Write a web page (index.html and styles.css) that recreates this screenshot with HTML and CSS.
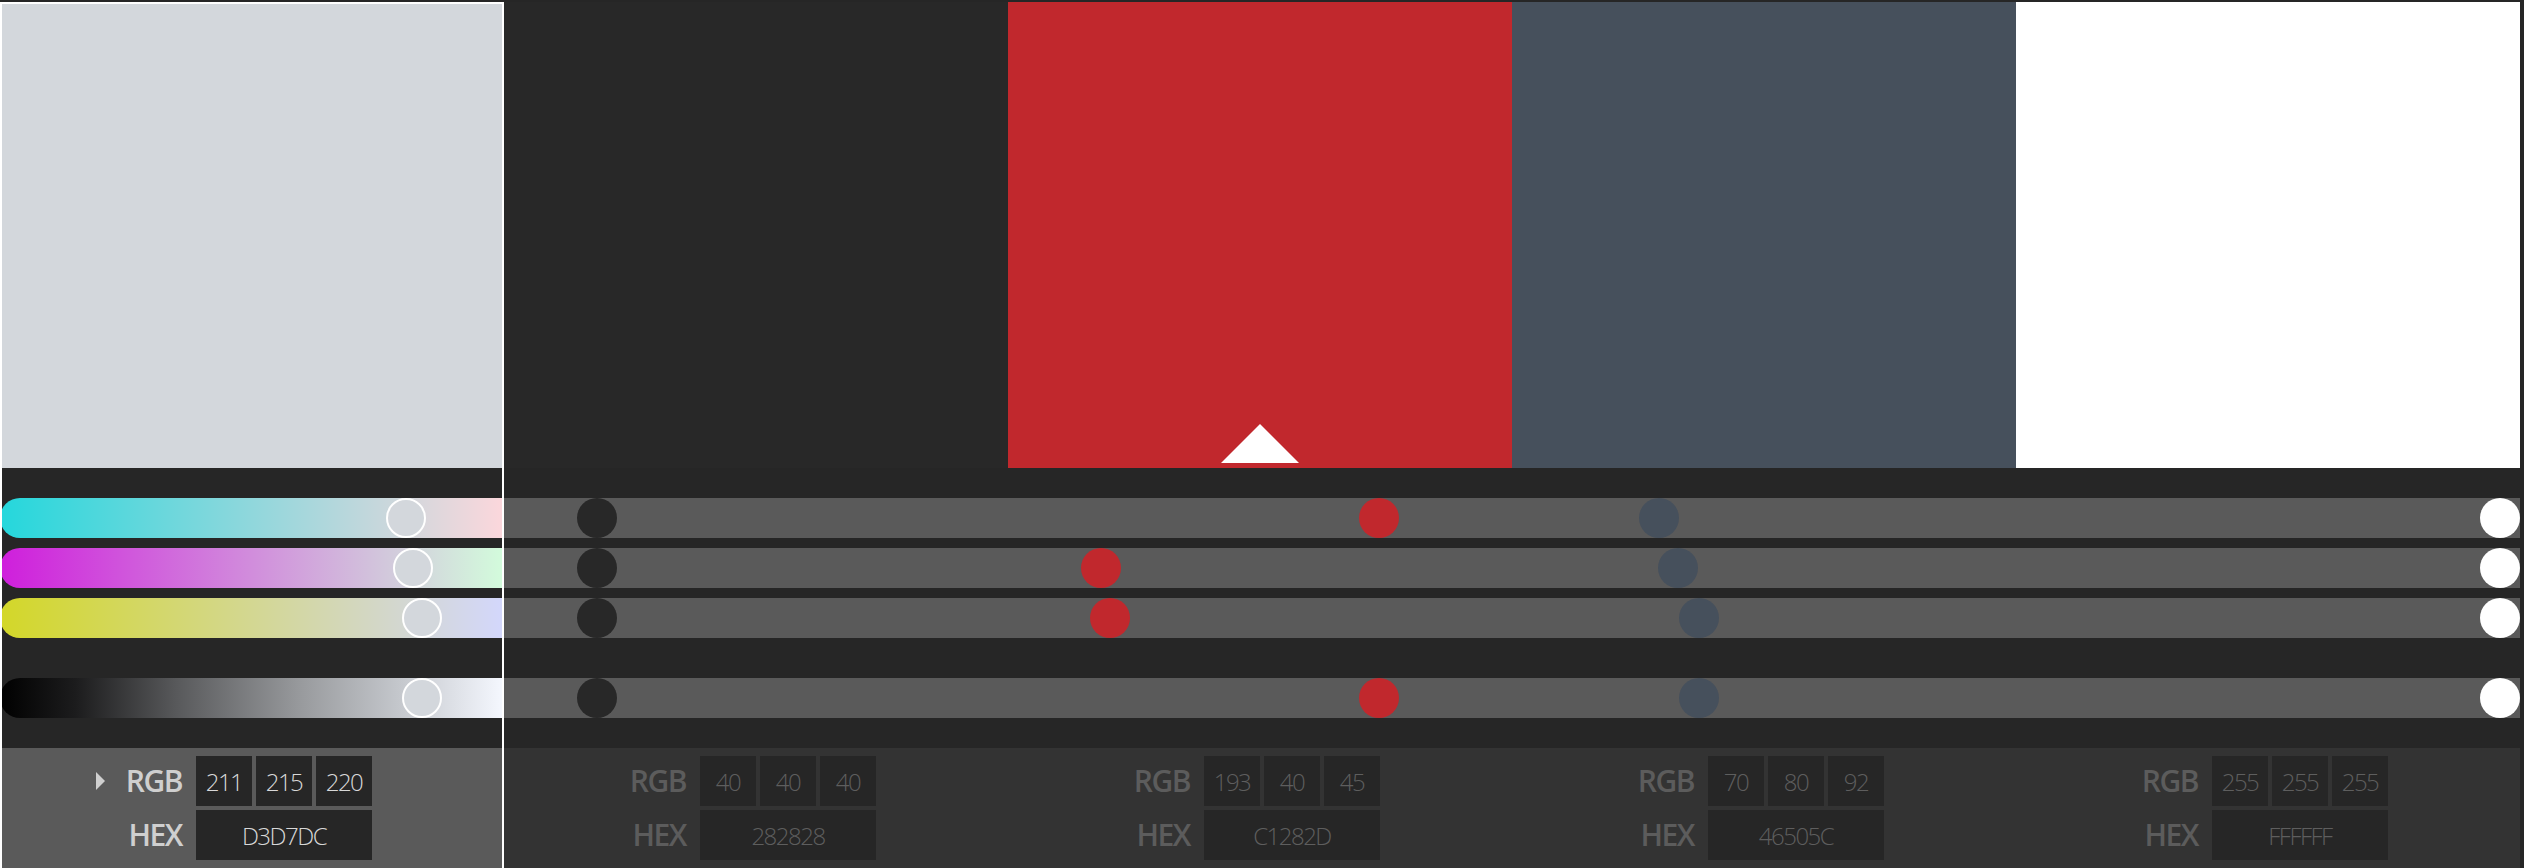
FILE: index.html
```html
<!DOCTYPE html>
<html lang="en">
<head>
<meta charset="utf-8">
<title>Palette picker</title>
<link rel="stylesheet" href="styles.css">
</head>
<body>
<div class="picker">
  <div class="col selected">
    <div class="swatch" style="background:#d3d7dc"></div>
    <div class="sliders">
      <div class="track grad-r"><span class="thumb ring" style="--v:211"></span></div>
      <div class="track grad-g"><span class="thumb ring" style="--v:215"></span></div>
      <div class="track grad-b"><span class="thumb ring" style="--v:220"></span></div>
      <div class="track grad-v spaced"><span class="thumb ring" style="--v:220"></span></div>
    </div>
    <div class="panel">
      <div class="row"><span class="label"><span class="caret"></span>RGB</span><div class="boxes"><span class="box">211</span><span class="box">215</span><span class="box">220</span></div></div>
      <div class="row"><span class="label">HEX</span><span class="box wide">D3D7DC</span></div>
    </div>
  </div>

  <div class="col">
    <div class="swatch" style="background:#282828"></div>
    <div class="sliders">
      <div class="track"><span class="thumb" style="--v:40;background:#282828"></span></div>
      <div class="track"><span class="thumb" style="--v:40;background:#282828"></span></div>
      <div class="track"><span class="thumb" style="--v:40;background:#282828"></span></div>
      <div class="track spaced"><span class="thumb" style="--v:40;background:#282828"></span></div>
    </div>
    <div class="panel">
      <div class="row"><span class="label">RGB</span><div class="boxes"><span class="box">40</span><span class="box">40</span><span class="box">40</span></div></div>
      <div class="row"><span class="label">HEX</span><span class="box wide">282828</span></div>
    </div>
  </div>

  <div class="col">
    <div class="swatch" style="background:#c1282d"><span class="pointer"></span></div>
    <div class="sliders">
      <div class="track"><span class="thumb" style="--v:193;background:#c1282d"></span></div>
      <div class="track"><span class="thumb" style="--v:40;background:#c1282d"></span></div>
      <div class="track"><span class="thumb" style="--v:45;background:#c1282d"></span></div>
      <div class="track spaced"><span class="thumb" style="--v:193;background:#c1282d"></span></div>
    </div>
    <div class="panel">
      <div class="row"><span class="label">RGB</span><div class="boxes"><span class="box">193</span><span class="box">40</span><span class="box">45</span></div></div>
      <div class="row"><span class="label">HEX</span><span class="box wide">C1282D</span></div>
    </div>
  </div>

  <div class="col">
    <div class="swatch" style="background:#46505c"></div>
    <div class="sliders">
      <div class="track"><span class="thumb" style="--v:70;background:#46505c"></span></div>
      <div class="track"><span class="thumb" style="--v:80;background:#46505c"></span></div>
      <div class="track"><span class="thumb" style="--v:92;background:#46505c"></span></div>
      <div class="track spaced"><span class="thumb" style="--v:92;background:#46505c"></span></div>
    </div>
    <div class="panel">
      <div class="row"><span class="label">RGB</span><div class="boxes"><span class="box">70</span><span class="box">80</span><span class="box">92</span></div></div>
      <div class="row"><span class="label">HEX</span><span class="box wide">46505C</span></div>
    </div>
  </div>

  <div class="col">
    <div class="swatch" style="background:#ffffff"></div>
    <div class="sliders">
      <div class="track"><span class="thumb" style="--v:255;background:#ffffff"></span></div>
      <div class="track"><span class="thumb" style="--v:255;background:#ffffff"></span></div>
      <div class="track"><span class="thumb" style="--v:255;background:#ffffff"></span></div>
      <div class="track spaced"><span class="thumb" style="--v:255;background:#ffffff"></span></div>
    </div>
    <div class="panel">
      <div class="row"><span class="label">RGB</span><div class="boxes"><span class="box">255</span><span class="box">255</span><span class="box">255</span></div></div>
      <div class="row"><span class="label">HEX</span><span class="box wide">FFFFFF</span></div>
    </div>
  </div>
</div>
</body>
</html>
```

FILE: styles.css
```css
html, body {
  margin: 0;
  padding: 0;
  background: #262626;
  height: 868px;
  overflow: hidden;
}

.picker {
  display: grid;
  grid-template-columns: repeat(5, 504px);
  padding-top: 2px;
  font-family: "Open Sans", "Noto Sans", sans-serif;
}

.col {
  position: relative;
  display: flex;
  flex-direction: column;
}

.col.selected::after {
  content: "";
  position: absolute;
  inset: 0;
  border: 2px solid #ffffff;
  border-bottom: none;
  pointer-events: none;
}

.swatch {
  position: relative;
  height: 466px;
}

.pointer {
  position: absolute;
  left: 50%;
  bottom: 5px;
  width: 78px;
  height: 39px;
  transform: translateX(-50%);
  background: #ffffff;
  clip-path: polygon(50% 0, 100% 100%, 0 100%);
}

.sliders {
  display: flex;
  flex-direction: column;
  gap: 10px;
  padding: 30px 0;
}

.track {
  position: relative;
  height: 40px;
  background: #5a5a5a;
}

.track.spaced {
  margin-top: 30px;
}

.selected .track {
  border-radius: 20px 0 0 20px;
}

.selected .thumb {
  margin-left: 2px;
}

.grad-r { background: linear-gradient(to right, rgb(36,215,220), rgb(252,215,220)); }
.grad-g { background: linear-gradient(to right, rgb(207,30,220), rgb(211,252,220)); }
.grad-b { background: linear-gradient(to right, rgb(211,215,40), rgb(211,215,252)); }
.grad-v { background: linear-gradient(to right, #000000, #1c1c1d 15%, #58595b 35%, #999b9e 60%, #c6c9ce 80%, #f5f8ff); }

.thumb {
  position: absolute;
  top: 0;
  left: calc((100% - 40px) * var(--v) / 255);
  width: 40px;
  height: 40px;
  border-radius: 50%;
  box-sizing: border-box;
}

.thumb.ring {
  background: #d3d7dc;
  border: 2.5px solid #ffffff;
}

.panel {
  height: 120px;
  box-sizing: border-box;
  background: #333333;
  padding: 8px 0 8px 90px;
  display: flex;
  flex-direction: column;
  gap: 4px;
  color: #5c5c5c;
}

.selected .panel {
  background: #5a5a5a;
  color: #cfcfcf;
}

.row {
  display: flex;
  align-items: center;
  gap: 14px;
  height: 50px;
}

.label {
  width: 92px;
  display: flex;
  align-items: center;
  justify-content: flex-end;
  font-size: 30px;
  font-weight: 600;
  letter-spacing: -1.5px;
  line-height: 1;
}

.caret {
  width: 0;
  height: 0;
  margin-left: 6px;
  margin-right: auto;
  border-top: 9px solid transparent;
  border-bottom: 9px solid transparent;
  border-left: 9px solid #cfcfcf;
}

.boxes {
  display: flex;
  gap: 4px;
}

.box {
  width: 56px;
  height: 50px;
  background: #262626;
  display: flex;
  align-items: center;
  justify-content: center;
  font-size: 24px;
  font-weight: 300;
  letter-spacing: -1.5px;
  color: #5e5e5e;
}

.selected .box {
  color: #d8d8d8;
}

.box.wide {
  width: 176px;
}
```
